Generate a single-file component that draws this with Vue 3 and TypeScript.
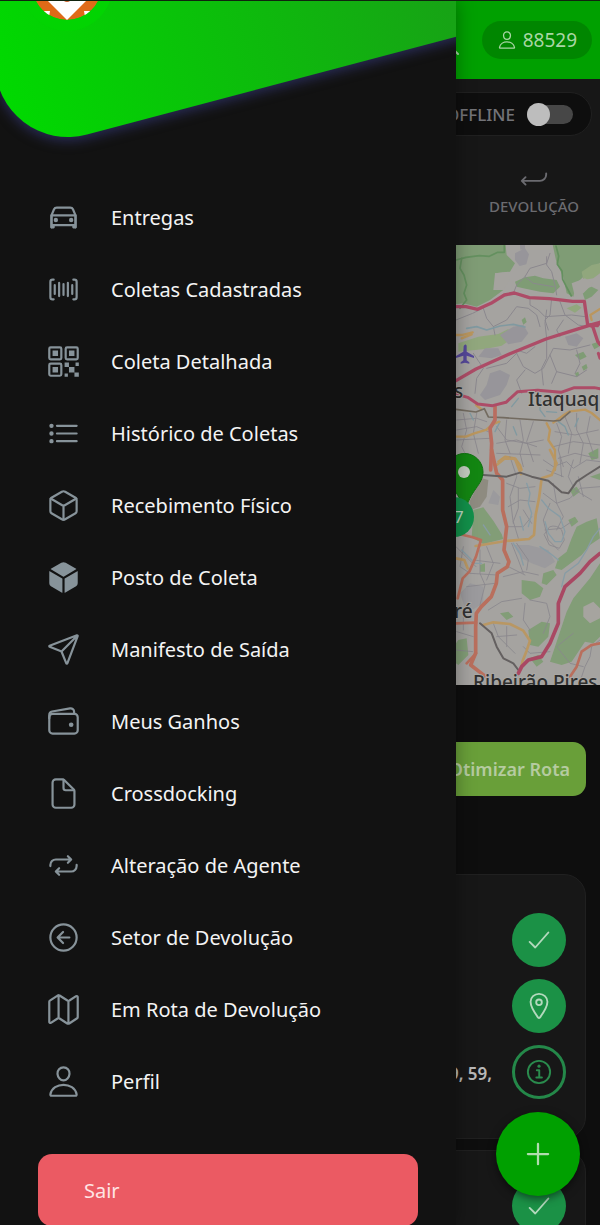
<script setup lang="ts">
import { ref } from 'vue'

interface MenuItem {
  label: string
  icon: string
  strokes: string[]
  fills?: string[]
}

const person: string[] = [
  'M344 144c-3.92 52.87-44 96-88 96s-84.15-43.12-88-96c-4-55 35-96 88-96s92 42 88 96z',
  'M256 304c-87 0-175.3 48-191.64 138.6C62.39 453.52 68.57 464 80 464h352c11.44 0 17.62-10.48 15.65-21.4C431.3 352 343 304 256 304z',
]
const check = 'M416 128L192 384l-96-96'

const menu: MenuItem[] = [
  {
    label: 'Entregas',
    icon: 'car',
    strokes: [
      'M80 224l37.78-88.15C123.93 121.5 139.6 112 157.11 112h197.78c17.51 0 33.18 9.5 39.33 23.85L432 224M80 224h352v144H80zM112 368v32H80v-32M432 368v32h-32v-32',
      'M80 224v176M432 224v176',
    ],
    fills: [
      'M144 260a32 32 0 100 64 32 32 0 000-64z',
      'M368 260a32 32 0 100 64 32 32 0 000-64z',
    ],
  },
  {
    label: 'Coletas Cadastradas',
    icon: 'barcode',
    strokes: [
      'M400 400h16a32 32 0 0032-32V144a32 32 0 00-32-32h-16M112 112H96a32 32 0 00-32 32v224a32 32 0 0032 32h16',
      'M384 192v128M320 160v192M256 176v160M192 160v192M128 192v128',
    ],
  },
  {
    label: 'Coleta Detalhada',
    icon: 'qr',
    strokes: [
      'M68 48h136a20 20 0 0120 20v136a20 20 0 01-20 20H68a20 20 0 01-20-20V68a20 20 0 0120-20z',
      'M308 48h136a20 20 0 0120 20v136a20 20 0 01-20 20H308a20 20 0 01-20-20V68a20 20 0 0120-20z',
      'M68 288h136a20 20 0 0120 20v136a20 20 0 01-20 20H68a20 20 0 01-20-20V308a20 20 0 0120-20z',
    ],
    fills: [
      'M96 96h80v80H96zM336 96h80v80h-80zM96 336h80v80H96z',
      'M336 336h80v80h-80zM272 272h64v64h-64zM416 416h64v64h-64zM432 272h48v48h-48zM272 432h48v48h-48z',
    ],
  },
  {
    label: 'Histórico de Coletas',
    icon: 'list',
    strokes: ['M160 144h288M160 256h288M160 368h288'],
    fills: [
      'M80 112a32 32 0 100 64 32 32 0 000-64zM80 224a32 32 0 100 64 32 32 0 000-64zM80 336a32 32 0 100 64 32 32 0 000-64z',
    ],
  },
  {
    label: 'Recebimento Físico',
    icon: 'cube-outline',
    strokes: [
      'M448 341.37V170.61A32 32 0 00432.11 143l-152-88.46a47.94 47.94 0 00-48.24 0L79.89 143A32 32 0 0064 170.61v170.76A32 32 0 0079.89 369l152 88.46a48 48 0 0048.24 0l152-88.46A32 32 0 00448 341.37z',
      'M69 153.99l187 110 187-110M256 463.99v-200',
    ],
  },
  {
    label: 'Posto de Coleta',
    icon: 'cube',
    strokes: [],
    fills: [
      'M440.9 136.3a4 4 0 000-6.91L288.16 40.65a64.14 64.14 0 00-64.33 0L71.12 129.39a4 4 0 000 6.91L254 243.88a4.06 4.06 0 004.09 0z',
      'M238 270.81L54 163.48a4 4 0 00-6 3.46v173.92a48 48 0 0023.84 41.39L234 479.48a4 4 0 006-3.46V274.27a4 4 0 00-2-3.46z',
      'M274 270.81L458 163.48a4 4 0 016 3.46v173.92a48 48 0 01-23.84 41.39L278 479.48a4 4 0 01-6-3.46V274.27a4 4 0 012-3.46z',
    ],
  },
  {
    label: 'Manifesto de Saída',
    icon: 'plane',
    strokes: [
      'M53.12 199.94l400-151.39a8 8 0 0110.33 10.33l-151.39 400a8 8 0 01-15-.34l-67.4-166.09a16 16 0 00-10.11-10.11L53.46 215a8 8 0 01-.34-15.06zM460 52L227 285',
    ],
  },
  {
    label: 'Meus Ganhos',
    icon: 'wallet',
    strokes: [
      'M96 144h320a48 48 0 0148 48v192a48 48 0 01-48 48H96a48 48 0 01-48-48V192a48 48 0 0148-48z',
      'M411.36 144v-30A50 50 0 00352 64.9L88.64 109.85A50 50 0 0048 159v49',
    ],
    fills: ['M368 270a34 34 0 100 68 34 34 0 000-68z'],
  },
  {
    label: 'Crossdocking',
    icon: 'document',
    strokes: [
      'M416 221.25V416a48 48 0 01-48 48H144a48 48 0 01-48-48V96a48 48 0 0148-48h98.75a32 32 0 0122.62 9.37l141.26 141.26a32 32 0 019.37 22.62z',
      'M256 56v120a32 32 0 0032 32h120',
    ],
  },
  {
    label: 'Alteração de Agente',
    icon: 'repeat',
    strokes: [
      'M320 120l48 48-48 48M352 168H144a80.24 80.24 0 00-80 80v16',
      'M192 392l-48-48 48-48M160 344h208a80.24 80.24 0 0080-80v-16',
    ],
  },
  {
    label: 'Setor de Devolução',
    icon: 'back-circle',
    strokes: [
      'M448 256c0-106-86-192-192-192S64 150 64 256s86 192 192 192 192-86 192-192z',
      'M249.38 336L170 256l79.38-80M181.03 256H342',
    ],
  },
  {
    label: 'Em Rota de Devolução',
    icon: 'map',
    strokes: [
      'M313.27 124.64L198.73 51.36a32 32 0 00-29.28.35L56.51 127.49A16 16 0 0048 141.63v295.8a16 16 0 0023.49 14.14l97.82-63.79a32 32 0 0129.5-.24l111.86 73a32 32 0 0029.27-.11l115.43-75.94a16 16 0 008.63-14.2V74.57a16 16 0 00-23.49-14.14l-98 63.86a32 32 0 01-29.24.35zM328 128v336M184 48v336',
    ],
  },
  { label: 'Perfil', icon: 'person', strokes: person },
]

const online = ref(false)
</script>

<template>
  <div class="shell">
    <main class="page">
      <header class="topbar">
        <button class="search" type="button" aria-label="Buscar">
          <svg class="icon" viewBox="0 0 512 512" aria-hidden="true">
            <path d="M221.1 64a157.1 157.1 0 10157 157.1A157.1 157.1 0 00221.1 64zM338.3 338.3L448 448" />
          </svg>
        </button>
        <button class="user" type="button">
          <svg class="icon" viewBox="0 0 512 512" aria-hidden="true">
            <path v-for="d in person" :key="d" :d="d" />
          </svg>
          <span>88529</span>
        </button>
      </header>

      <section class="status">
        <label class="presence">
          <span>OFFLINE</span>
          <input v-model="online" class="toggle" type="checkbox" />
        </label>
        <div class="tabs">
          <button class="tab" type="button">
            <svg class="icon" viewBox="0 0 512 512" aria-hidden="true">
              <path d="M112 352l-64-64 64-64M64 288h294c58.76 0 106-49.33 106-108v-20" />
            </svg>
            <span>DEVOLUÇÃO</span>
          </button>
        </div>
      </section>

      <svg class="map" viewBox="0 245 600 440" role="img" aria-label="Mapa">
        <rect y="245" width="600" height="440" fill="#a5a3a0" />
        <!-- northern half -->
        <g transform="translate(450 240) scale(.3333)" fill="none" stroke-linecap="round" stroke-linejoin="round">
          <g fill="#7f9c75">
            <path d="M0 0H165L170 45 195 70 180 95 135 100 130 150 160 150 120 180 80 200 40 190 0 195Z" />
            <path d="M305 0H450V70L420 85 400 110 380 130 370 170 350 160 340 110 320 70Z" />
            <path d="M195 125l30-13 30-5 25 8 40 5 10 20-20 20-40-5-50-10-20-5z" />
            <path d="M395 150l30-10 20 10-20 20-20 10z" />
            <path d="M375 345l25-10 10 15-20 10zM425 312l18-6 4 14-14 8zM395 380l14-8 4 12-12 8z" />
            <path d="M415 640l30-15v30l-20 5zM215 240l10-8 5 14-10 8zM375 400l10-5 3 12-9 4z" />
          </g>
          <g fill="#91a77d">
            <path d="M25 310l60-20 60-8 30-15 10 30-30 20-50 10-80 8z" />
            <path d="M395 95l30-20 25-5v30l-20 15-30 5zM350 205l30-12 15 10-20 15z" />
          </g>
          <path d="M135 100l40-5 5 25-20 30-25-5zM365 130l40-15 25 15-30 30-25 10z" fill="#a5a39f" />
          <g fill="#97959a">
            <path d="M195 40l30-15 12 18-8 30-20 5-14-18zM210 15l15-2v14l-14 2z" />
            <path d="M150 285l40-25 30-5 15 25-20 25-40 8z" />
            <path d="M120 400l30-10 30 15-10 30-20 30-45 15-15-15 20-30z" />
            <path d="M345 290l35-10 20 15-20 25-25-5zM85 350l20-25 40 0 10 20-30 10z" />
          </g>
          <g stroke="#64905f" stroke-width="5">
            <path d="M18 60l30-8 40-5 30 2 25-12 20 0 0-25" />
            <path d="M35 55l-5 30 12 20 8 30-8 25 8 20-20 25" />
            <path d="M318 18l8 30-4 25 14 20 2 25 10 20 16 30" />
          </g>
          <g stroke="#8b888e" stroke-width="3">
            <path d="M190 160l10-25 25-25 15-25 50-15 10-30M290 50l0 25 15 20 10 40 5 30M225 110l25 20 60 10" />
            <path d="M18 240l50-20 30-15 20-15M100 205l10 30 20 25 5 25M130 260l40-20 30-40 35 5 25 20 10 35" />
            <path d="M240 175l0 20 25 15 20 20 80-5 40 5M290 210l-5 40 5 45 0 60-15 30 5 50" />
            <path d="M330 185l15 40 40 30 25 5M305 175l-5 50-15 15 10 30M340 240l-20 30 10 20" />
            <path d="M70 340l30 45-20 30-5 45M110 385l60-15 30-30M200 340l20 40 35 20 25-15 30-60 50 5 60-15" />
            <path d="M225 390l-25 30 15 40M255 320l-25 20-30-10M300 345l20 50-15 35M320 395l60 15 30-20M380 330l10 40-15 30" />
          </g>
          <g stroke="#89868c" stroke-width="2.5">
            <path d="M20 540l60-5 30 10M40 520l10 50-15 50 10 20M80 520l-10 60 15 60M20 570l60-10 35 15M20 600l100-5" />
            <path d="M140 560l30 40 60 10 50-10M170 540l-5 60 15 40M210 540l10 60-10 40 10 40M250 545l-20 60 20 60M140 610l60-10 60 20M140 640l130 5" />
            <path d="M320 550l15 40-10 40 15 50M345 530l20 50-10 60M380 520l0 50 20 40-10 60M420 530l-10 50 20 60M315 575l60 10 70-15M310 620l60-15 80 10M325 655l50-15 65 15" />
          </g>
          <g stroke="#8099a0" stroke-width="5">
            <path d="M50 265l30-5 30 10 40-12 40-5 35 8" />
            <path d="M270 480l0 30 15 20M290 515l30 2M205 475l-20 25M150 545l-15 30M60 520l10 20M325 545l20 15 10 25M385 535l-10 25M190 560l10 25" stroke-width="4" />
          </g>
          <g stroke="#ba965e" stroke-width="7">
            <path d="M18 590l30 0 25-10 35-10 22-18 18-7" />
            <path d="M310 548l30-22 20-12 45-5 20 10 30 25" />
            <path d="M290 550l10 20-5 30 20 30 0 60M145 665l20-15 30 5 15 20 5 15M18 285l20 0 30-8M425 240l-4-15 29-18" />
            <path d="M35 295l30-12M78 495l15 12" />
          </g>
          <path d="M18 508l60 8 25-10 12 25 45 2 60 4 90 6 20-2 30-25" stroke="#736b60" stroke-width="5" />
          <path d="M135 497l0 43-15 25 5 45-3 80" stroke="#b96d60" stroke-width="11" />
          <g stroke="#ad4c67" stroke-width="10">
            <path d="M18 200l30 0 35 8 40-18 40-25 30-6 45 14 60 3 70 8 35 0 10 70 15 5 15 45 7 10" />
            <path d="M18 422l60-35 100-45 110-45 70-22 70-22 22-6M420 255l22 2 8-10" />
            <path d="M18 462l35 10 30 20 45 5 40-10 35-32 60-4 70 6 40-14 60 0 20 4M445 340l5 15" stroke-width="9" />
          </g>
          <path d="M41 318c3-6 8-6 9 0v17l22 13v6l-22-7v14l8 6v4l-13-3-13 3v-4l8-6v-14l-22 7v-6l22-13z" fill="#554899" />
        </g>
        <!-- southern half -->
        <g transform="translate(450 450) scale(.3333)" fill="none" stroke-linecap="round" stroke-linejoin="round">
          <g fill="#829d77">
            <path d="M70 180l30-8 30 40 25 40 5 15-60 15-35-20z" />
            <path d="M380 230l30-15 30-10 10 60-30 20-25 30-40 30-20 15-20-5 10-30 25-20 15-40z" />
            <path d="M450 340V560l-20 20-25-5-40 60-30 10-35-10 20-60 30-90 20-40 50-60z" />
            <path d="M355 210l20-10 10 15-20 15zM280 370l30-10 10 15-30 30-15-5zM215 390l40 5 25 20-10 25-30 10-25-20zM235 540l40-25 25 5-5 40-30 30-25-5z" />
            <path d="M25 570l25-5 5 50-30 30-7-5v-60zM150 490l25-5 15 15-20 10zM90 345l15-5 0 25-15 0zM360 120l20-10 10 15-20 15z" />
            <path d="M240 625l25-10 15 20-20 15zM420 80l30-10v20z" />
          </g>
          <path d="M400 470l30-15 20 20v30l-30 15-20-20zM410 330l20-20 10 10-20 20z" fill="#a6a49f" />
          <path d="M190 285l45 0 60 15 20 35-30 20-40-15-30-15zM30 430l30-30 40 10 0 50-50 30zM130 120l20 20-5 25-30-5z" fill="#9b9a9d" />
          <path d="M95 85l20 5-5 50-20 30-28 10-4-25z" fill="#7f7c6a" opacity=".6" />
          <g stroke="#89878d" stroke-width="2.5">
            <path d="M18 290l60 60M40 290l-10 60 30 20M90 300l0 70 15 35-15 60M110 290l20 50-20 50M70 330l80 10M60 370l80 5M50 410l85-10" />
            <path d="M180 20l20 60-20 60 10 80M170 100l40 15 45-5M175 170l35-20 45 5M205 115l0 60-15 40 15 50M170 230l50 0 25-30M185 280l20 50 15 40M200 280l35 50-5 30M160 380l60-15 45 10M175 350l50 25M220 180l25 40" />
            <path d="M280 30l30 20 40-15 20 20 40-25 40 5M290 60l50 20M330 20l5 60M370 30l-15 50 20 40 50 30M385 80l15 60M280 130l40 30 40-15 30-30 60-5M310 100l10 60 20 40-20 40M300 160l-20 50 15 60 30 30M285 240l50-5 30-20" />
            <path d="M130 520l15 40 50 50M170 530l0 60M140 560l60-5M115 480l40-25 60-10M225 460l-5 50 20 30M240 450l50 10 10 40-20 50M220 590l20 20 60-5M18 600l50 5M20 545l50 15M40 500l0 40M370 550l-50 40 40 50 40 10" />
            <path d="M300 230a30 30 0 0135 10l8 30-15 25-30-10-15-30z" />
            <path d="M450 570l-25 20-5 30-15 30-15 45" />
          </g>
          <g stroke="#879ca5" stroke-width="4">
            <path d="M230 100l10 30-5 30 10 30-10 40M275 150l20 25 35 25 15 45-10 30-20 0-20-25-10-35M190 280l20 30 10 35M450 235l-20 25-20 40-25 40-40 30-10 40M270 290l30 20 25 20M35 300l40 40 20 0M210 200l10 40M100 225l20 30" />
          </g>
          <g stroke="#b99763" stroke-width="8">
            <path d="M300 0l20 40-15 35-30 10-8 60-10 50-5 60-15 12-70 6-90 15M140 45l25-20 30 2 18 45M18 325l25 5 10 25M100 525l30-8 50 5 40 20 20 30-10 30-12 30-5 25" />
          </g>
          <g stroke="#b96f5d" stroke-width="11">
            <path d="M125 0l15 70 18 20 0 90 12 50-8 70 15 35-5 15-30 20-3 30-15 40-30 30-15 20-2 40 0 80-15 35 45 35" />
            <path d="M18 250l50 12 25 8-15 50-20 45-20 20-15 60M18 520l60-2M50 640l28-30M360 680l20-30 15-45 30-20 25-5" stroke-width="8" />
          </g>
          <g stroke="#646060" stroke-width="6">
            <path d="M100 75l70 5 40-12 35 12 50 12 40 35 20 3 25-35 30-20 40-25" />
            <path d="M90 520l35 30 15 40 20 35 30 15 15 20" />
          </g>
          <path d="M205 670l10-20 20-20 40-10 25-40 25-60 0-60 20-50 45-40 30-35 30-25" stroke="#a94863" stroke-width="11" />
        </g>
        <g class="places">
          <text x="454" y="398">s</text>
          <text x="528" y="406">Itaquaq</text>
          <text x="454" y="618">ré</text>
          <text x="473" y="689">Ribeirão Pires</text>
        </g>
        <path d="M446 472a18 18 0 1137 0c0 13-13 18-18 40-6-22-19-27-19-40z" fill="#138612" stroke="#0c720c" />
        <circle cx="464" cy="472" r="6" fill="#c3cbbf" />
        <circle cx="454" cy="517" r="20" fill="#12904a" />
        <text class="count" x="454" y="523">7</text>
      </svg>

      <div class="actions">
        <button class="optimize" type="button">Otimizar Rota</button>
      </div>

      <section class="deliveries">
        <article class="card first">
          <p class="address">9, 59,</p>
          <div class="card-actions">
            <button class="round" type="button" aria-label="Confirmar">
              <svg class="icon" viewBox="0 0 512 512" aria-hidden="true"><path :d="check" /></svg>
            </button>
            <button class="round" type="button" aria-label="Localização">
              <svg class="icon" viewBox="0 0 512 512" aria-hidden="true">
                <path d="M256 48c-79.5 0-144 61.39-144 137 0 87 96 224.87 131.25 272.49a15.77 15.77 0 0025.5 0C304 409.89 400 272.07 400 185c0-75.61-64.5-137-144-137z" />
                <circle cx="256" cy="192" r="48" />
              </svg>
            </button>
            <button class="round outlined" type="button" aria-label="Informações">
              <svg class="icon" viewBox="0 0 496 496" aria-hidden="true">
                <circle cx="248" cy="248" r="184" />
                <path d="M212 220h40v116M204 340h92" />
                <circle class="solid" cx="248" cy="152" r="26" />
              </svg>
            </button>
          </div>
        </article>
        <article class="card">
          <div class="card-actions">
            <button class="round" type="button" aria-label="Confirmar">
              <svg class="icon" viewBox="0 0 512 512" aria-hidden="true"><path :d="check" /></svg>
            </button>
          </div>
        </article>
      </section>
    </main>

    <button class="fab" type="button" aria-label="Adicionar">
      <svg class="icon" viewBox="0 0 512 512" aria-hidden="true"><path d="M256 112v288M400 256H112" /></svg>
    </button>

    <aside class="drawer">
      <svg class="banner" viewBox="0 0 456 180" aria-hidden="true">
        <defs>
          <linearGradient id="banner-green" x1="0" y1=".1" x2="1" y2="0">
            <stop offset="0" stop-color="#00da00" />
            <stop offset="1" stop-color="#1a9c18" />
          </linearGradient>
          <clipPath id="logo-clip"><circle cx="67" cy="-16" r="35" /></clipPath>
        </defs>
        <path class="banner-shape" d="M-40 -40H500V24L87 133.500A73 73 0 01-5 63V-40Z" fill="url(#banner-green)" />
        <circle cx="67" cy="-16" r="46" fill="#02d402" />
        <g clip-path="url(#logo-clip)">
          <circle cx="67" cy="-16" r="35" fill="#df6a18" />
          <path d="M47 -1L67 19 87 -1 67 -21Z" fill="#fff" />
          <circle cx="67" cy="-4" r="5" fill="#c9602a" />
          <path d="M44 10h6l-1 6h-5zM84 10h6v6h-5z" fill="#fff" />
        </g>
      </svg>
      <nav class="menu" aria-label="Menu principal">
        <a v-for="item in menu" :key="item.label" class="item" href="#">
          <svg class="icon" :class="item.icon" viewBox="0 0 512 512" aria-hidden="true">
            <path v-for="d in item.strokes" :key="d" :d="d" />
            <path v-for="d in item.fills" :key="d" class="solid" :d="d" />
          </svg>
          <span>{{ item.label }}</span>
        </a>
      </nav>
      <button class="logout" type="button">Sair</button>
    </aside>
  </div>
</template>

<style>
body {
  background: #0e0e0e;
}
</style>

<style scoped>
.shell {
  position: relative;
  box-sizing: border-box;
  height: 100vh;
  overflow: hidden;
  border-top: 1px solid #10240f;
  background: #0e0e0e;
  font-family: 'Noto Sans', 'Open Sans', sans-serif;
}

button {
  margin: 0;
  padding: 0;
  border: 0;
  background: none;
  font-family: inherit;
  cursor: pointer;
}

.icon {
  flex: none;
  display: block;
  fill: none;
  stroke: currentColor;
  stroke-width: 32;
  stroke-linecap: round;
  stroke-linejoin: round;
}

.solid {
  fill: currentColor;
  stroke: none;
}

.topbar {
  display: flex;
  align-items: center;
  justify-content: flex-end;
  gap: 20px;
  height: 78px;
  padding-right: 8px;
  background: #00a000;
}

.search {
  padding-top: 4px;
  color: #a9d6a5;
}

.search .icon {
  width: 32px;
  height: 32px;
}

.user {
  display: flex;
  align-items: center;
  gap: 6px;
  height: 38px;
  padding: 0 15px;
  border-radius: 19px;
  background: #008600;
  color: #a9d6a5;
  font-size: 19px;
}

.user .icon {
  width: 20px;
  height: 20px;
}

.status {
  display: flex;
  flex-direction: column;
  align-items: flex-end;
  height: 153px;
  padding-top: 13px;
  background: #171717;
}

.presence {
  display: flex;
  align-items: center;
  gap: 12px;
  height: 42px;
  margin-right: 8px;
  padding: 0 18px 0 24px;
  border: 1px solid #202020;
  border-radius: 22px;
  background: #0e0e0e;
  color: #737378;
  font-size: 17px;
  font-weight: 500;
}

.toggle {
  appearance: none;
  display: flex;
  align-items: center;
  width: 46px;
  height: 19px;
  margin: 0;
  border-radius: 10px;
  background: #474747;
}

.toggle::before {
  content: '';
  width: 23px;
  height: 23px;
  border-radius: 50%;
  background: #bdbdbd;
}

.toggle:checked {
  justify-content: flex-end;
  background: #00a000;
}

.tabs {
  display: flex;
  justify-content: flex-end;
  padding-top: 28px;
}

.tab {
  display: flex;
  flex-direction: column;
  align-items: center;
  width: 132px;
  color: #6b6b70;
  font-size: 15px;
  font-weight: 500;
  line-height: 24px;
}

.tab .icon {
  width: 30px;
  height: 30px;
}

.map {
  display: block;
  width: 100%;
}

.places {
  fill: #303030;
  stroke: #aaa8a5;
  stroke-width: 2px;
  paint-order: stroke;
  font-size: 19px;
  font-weight: 500;
}

.count {
  fill: #bcd6c3;
  font-size: 17px;
}

.actions {
  display: flex;
  justify-content: flex-end;
  padding: 57px 14px 78px;
}

.optimize {
  height: 54px;
  padding: 0 16px;
  border-radius: 13px;
  background: #699f39;
  color: #b5cba0;
  font-size: 18px;
  font-weight: 600;
}

.deliveries {
  display: flex;
  flex-direction: column;
  gap: 11px;
  padding: 0 14px;
}

.card {
  display: flex;
  align-items: flex-end;
  justify-content: flex-end;
  gap: 20px;
  padding: 28px 19px 39px;
  border: 1px solid #202020;
  border-radius: 22px;
  background: #171717;
}

.first {
  padding-top: 38px;
}

.address {
  margin: 0 0 13px;
  color: #b8b8b8;
  font-size: 17px;
  font-weight: 600;
  line-height: 24px;
}

.card-actions {
  display: flex;
  flex-direction: column;
  gap: 12px;
}

.round {
  display: flex;
  align-items: center;
  justify-content: center;
  width: 54px;
  height: 54px;
  border-radius: 50%;
  background: #1b9146;
  color: #b3d9bd;
}

.round .icon {
  width: 30px;
  height: 30px;
}

.outlined {
  border: 3px solid #248849;
  background: none;
  color: #2a8b4d;
}

.fab {
  position: absolute;
  right: 20px;
  bottom: 29px;
  display: flex;
  align-items: center;
  justify-content: center;
  width: 84px;
  height: 84px;
  border-radius: 50%;
  background: #00a000;
  box-shadow: 0 3px 8px rgba(0, 0, 0, 0.5);
  color: #b0dcae;
}

.fab .icon {
  width: 36px;
  height: 36px;
}

.drawer {
  position: absolute;
  inset: 0 auto 0 0;
  width: 76%;
  overflow: hidden;
  background: #121212;
  box-shadow: 0 0 18px rgba(0, 0, 0, 0.35);
}

.banner {
  display: block;
  width: 100%;
}

.banner-shape {
  filter: drop-shadow(0 4px 6px rgba(62, 68, 150, 0.5));
}

.item {
  display: flex;
  align-items: center;
  gap: 30px;
  height: 72px;
  padding-left: 46px;
  color: #f4f4f4;
  font-size: 20px;
  text-decoration: none;
}

.item .icon {
  width: 35px;
  height: 35px;
  color: #87939a;
}

.logout {
  display: block;
  width: calc(100% - 76px);
  height: 72px;
  margin: 37px 38px 0;
  padding-left: 46px;
  border-radius: 14px;
  background: #eb5a63;
  color: #ffe4e4;
  font-size: 20px;
  text-align: left;
}
</style>
